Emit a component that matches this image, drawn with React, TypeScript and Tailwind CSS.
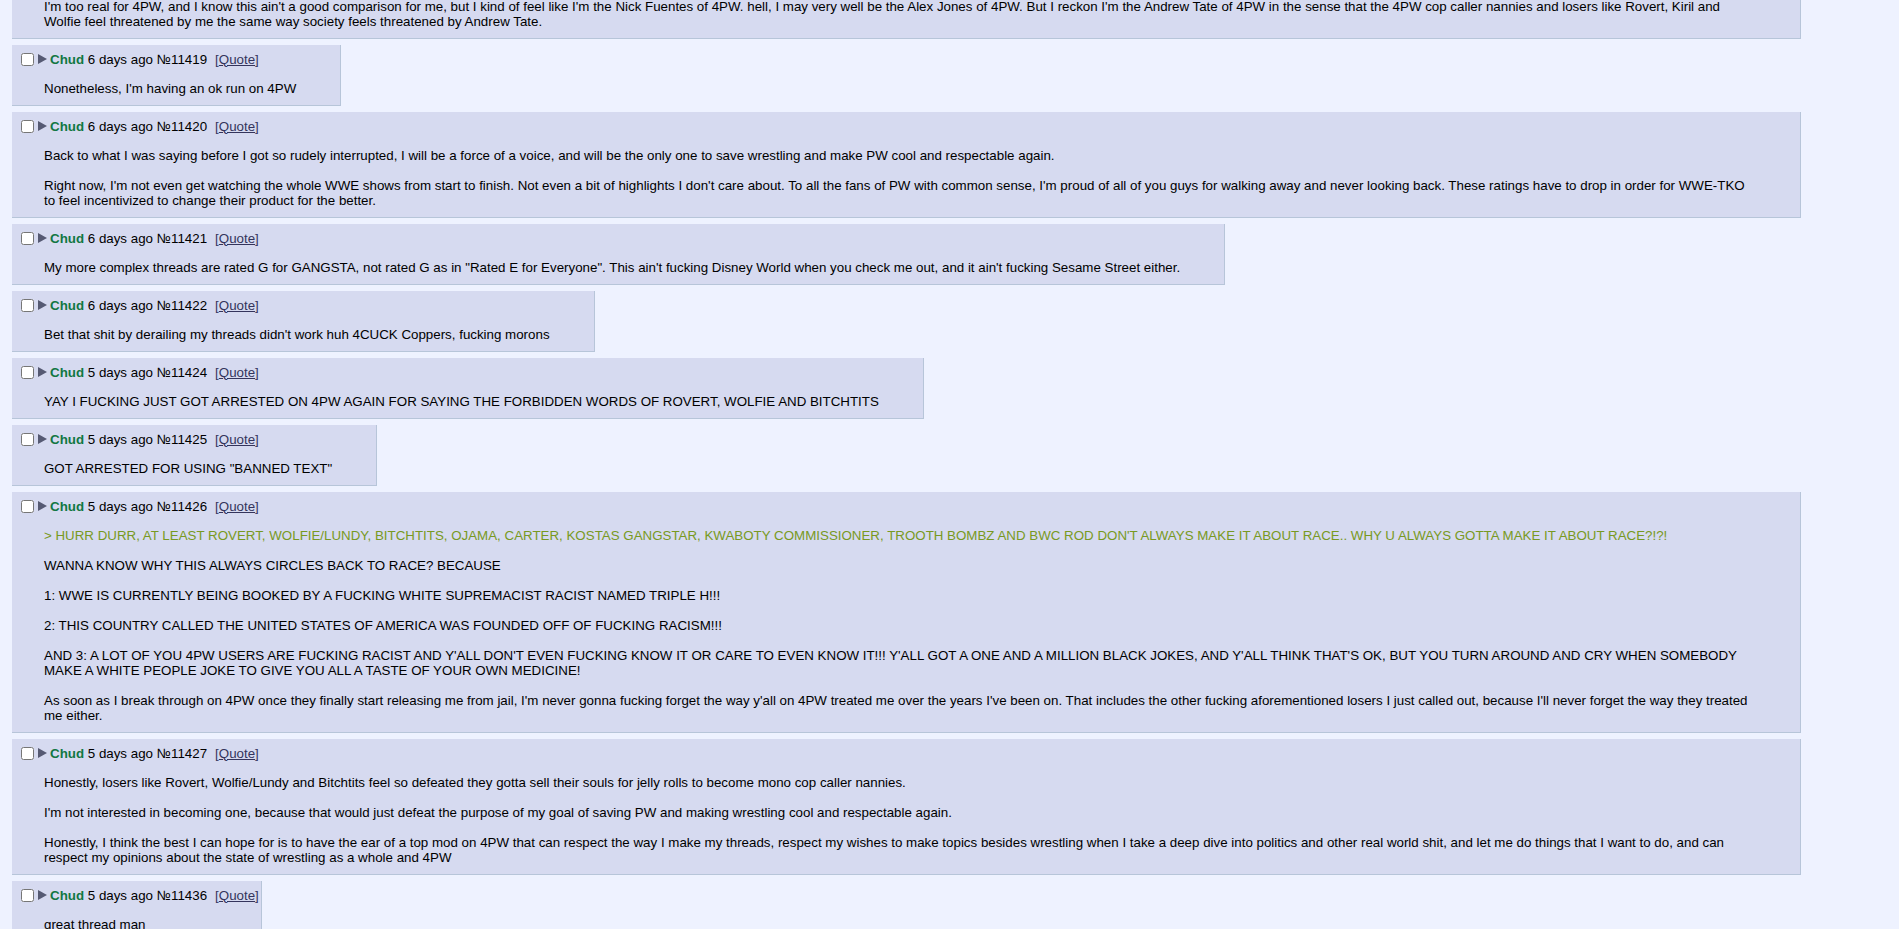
const posts = [
  {
    no: 11419,
    ago: "6 days ago",
    body: ["Nonetheless, I'm having an ok run on 4PW"],
  },
  {
    no: 11420,
    ago: "6 days ago",
    body: [
      "Back to what I was saying before I got so rudely interrupted, I will be a force of a voice, and will be the only one to save wrestling and make PW cool and respectable again.",
      "Right now, I'm not even get watching the whole WWE shows from start to finish. Not even a bit of highlights I don't care about. To all the fans of PW with common sense, I'm proud of all of you guys for walking away and never looking back. These ratings have to drop in order for WWE-TKO to feel incentivized to change their product for the better.",
    ],
  },
  {
    no: 11421,
    ago: "6 days ago",
    body: [
      'My more complex threads are rated G for GANGSTA, not rated G as in "Rated E for Everyone". This ain\'t fucking Disney World when you check me out, and it ain\'t fucking Sesame Street either.',
    ],
  },
  {
    no: 11422,
    ago: "6 days ago",
    body: ["Bet that shit by derailing my threads didn't work huh 4CUCK Coppers, fucking morons"],
  },
  {
    no: 11424,
    ago: "5 days ago",
    body: ["YAY I FUCKING JUST GOT ARRESTED ON 4PW AGAIN FOR SAYING THE FORBIDDEN WORDS OF ROVERT, WOLFIE AND BITCHTITS"],
  },
  {
    no: 11425,
    ago: "5 days ago",
    body: ['GOT ARRESTED FOR USING "BANNED TEXT"'],
  },
  {
    no: 11426,
    ago: "5 days ago",
    body: [
      "> HURR DURR, AT LEAST ROVERT, WOLFIE/LUNDY, BITCHTITS, OJAMA, CARTER, KOSTAS GANGSTAR, KWABOTY COMMISSIONER, TROOTH BOMBZ AND BWC ROD DON'T ALWAYS MAKE IT ABOUT RACE.. WHY U ALWAYS GOTTA MAKE IT ABOUT RACE?!?!",
      "WANNA KNOW WHY THIS ALWAYS CIRCLES BACK TO RACE? BECAUSE",
      "1: WWE IS CURRENTLY BEING BOOKED BY A FUCKING WHITE SUPREMACIST RACIST NAMED TRIPLE H!!!",
      "2: THIS COUNTRY CALLED THE UNITED STATES OF AMERICA WAS FOUNDED OFF OF FUCKING RACISM!!!",
      "AND 3: A LOT OF YOU 4PW USERS ARE FUCKING RACIST AND Y'ALL DON'T EVEN FUCKING KNOW IT OR CARE TO EVEN KNOW IT!!! Y'ALL GOT A ONE AND A MILLION BLACK JOKES, AND Y'ALL THINK THAT'S OK, BUT YOU TURN AROUND AND CRY WHEN SOMEBODY MAKE A WHITE PEOPLE JOKE TO GIVE YOU ALL A TASTE OF YOUR OWN MEDICINE!",
      "As soon as I break through on 4PW once they finally start releasing me from jail, I'm never gonna fucking forget the way y'all on 4PW treated me over the years I've been on. That includes the other fucking aforementioned losers I just called out, because I'll never forget the way they treated me either.",
    ],
  },
  {
    no: 11427,
    ago: "5 days ago",
    body: [
      "Honestly, losers like Rovert, Wolfie/Lundy and Bitchtits feel so defeated they gotta sell their souls for jelly rolls to become mono cop caller nannies.",
      "I'm not interested in becoming one, because that would just defeat the purpose of my goal of saving PW and making wrestling cool and respectable again.",
      "Honestly, I think the best I can hope for is to have the ear of a top mod on 4PW that can respect the way I make my threads, respect my wishes to make topics besides wrestling when I take a deep dive into politics and other real world shit, and let me do things that I want to do, and can respect my opinions about the state of wrestling as a whole and 4PW",
    ],
  },
  {
    no: 11436,
    ago: "5 days ago",
    body: ["great thread man"],
  },
];

const Body = ({ lines }: { lines: string[] }) => (
  <div className="ml-[30px] mr-[42px] flex flex-col gap-[15px]">
    {lines.map((l, i) => (
      <p key={i} className={l.startsWith(">") ? "text-[#789922]" : ""}>
        {l}
      </p>
    ))}
  </div>
);

const Reply = ({ no, ago, body }: { no: number; ago: string; body: string[] }) => {
  return (
    <div className="w-fit max-w-full bg-[#d6daf0] border-r border-b border-[#b7c5d9] px-[2px] pt-[2px] pb-[2px]">
      <div className="h-[24px] flex items-center whitespace-nowrap">
        <input type="checkbox" className="ml-[7px] w-[13px] h-[13px] m-0" />
        <svg width="9" height="10" viewBox="0 0 9 10" className="ml-[4px] mr-[3px]">
          <polygon points="0,0 9,5 0,10" fill="#565a73" />
        </svg>
        <span className="font-bold text-[#117743]">Chud</span>
        <span>&nbsp;{ago} №{no}</span>
        <span className="ml-[8px] text-[#34345c]">
          [<span className="underline">Quote</span>]
        </span>
      </div>
      <div className="mt-[10px] mb-[7px]">
        <Body lines={body} />
      </div>
    </div>
  );
};

export default function App() {
  return (
    <div
      className="h-screen overflow-hidden bg-[#eef2ff] text-black text-[13.33px] leading-[15px]"
      style={{ fontFamily: '"Liberation Sans", Arial, sans-serif' }}
    >
      <div className="w-[1801px] pl-[12px] flex flex-col gap-[6px]">
        <div className="w-fit max-w-full bg-[#d6daf0] border-r border-b border-[#b7c5d9] px-[2px] pb-[2px] -mt-[1px]">
          <div className="mb-[7px]">
            <Body
              lines={[
                "I'm too real for 4PW, and I know this ain't a good comparison for me, but I kind of feel like I'm the Nick Fuentes of 4PW. hell, I may very well be the Alex Jones of 4PW. But I reckon I'm the Andrew Tate of 4PW in the sense that the 4PW cop caller nannies and losers like Rovert, Kiril and Wolfie feel threatened by me the same way society feels threatened by Andrew Tate.",
              ]}
            />
          </div>
        </div>
        {posts.map((p) => (
          <Reply key={p.no} {...p} />
        ))}
      </div>
    </div>
  );
}
